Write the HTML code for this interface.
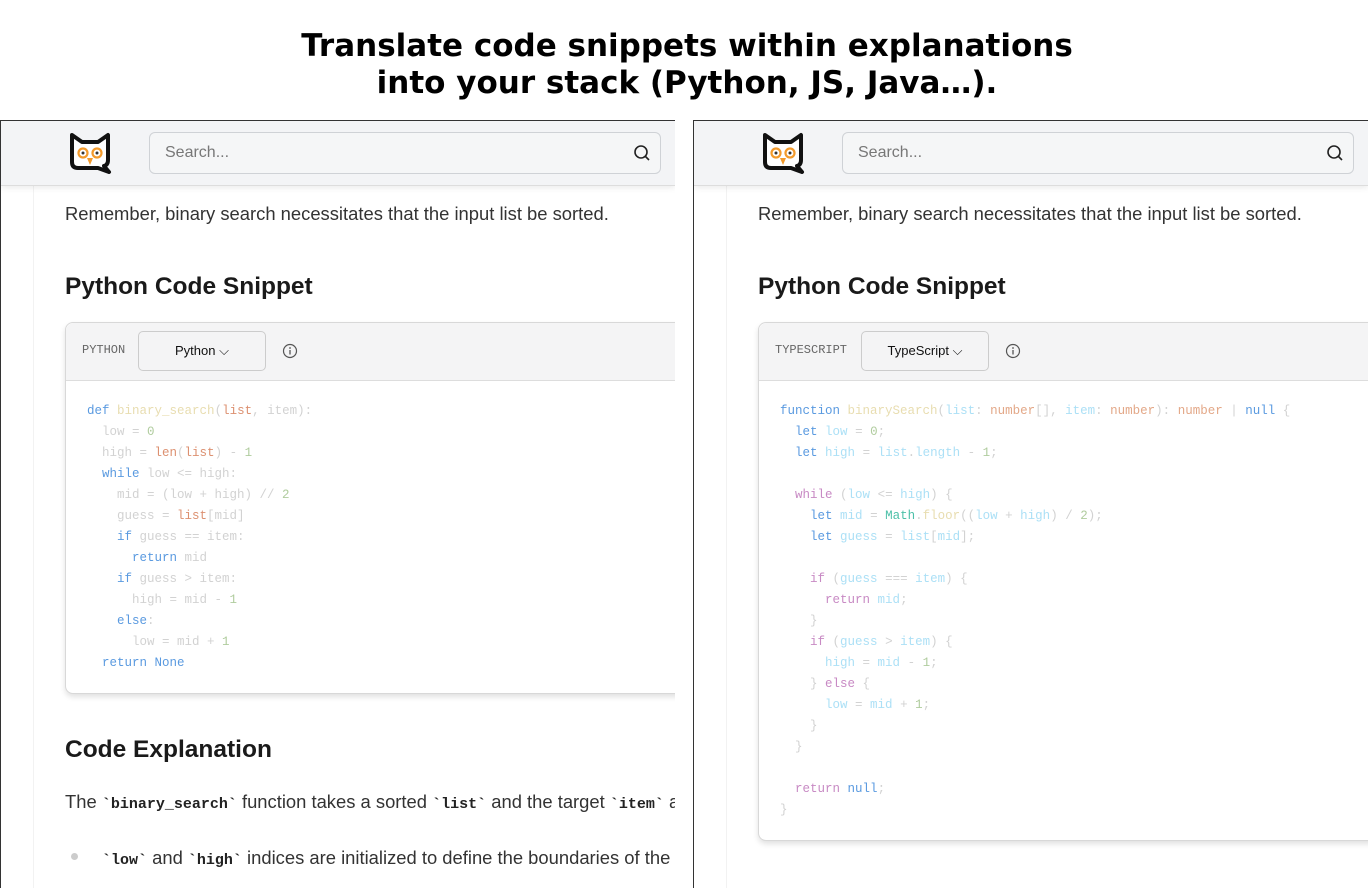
<!DOCTYPE html>
<html><head><meta charset="utf-8"><style>
*{box-sizing:border-box;margin:0;padding:0}
body{width:1368px;height:888px;background:#fff;position:relative;overflow:hidden;font-family:"Liberation Sans","DejaVu Sans",sans-serif;color:#1f1f1f}
.title{position:absolute;top:28px;left:3px;width:1368px;text-align:center;font-family:"DejaVu Sans",sans-serif;font-weight:bold;font-size:31px;line-height:37px;color:#000}
.panel{position:absolute;top:120px;width:675px;height:768px;border-left:1px solid #333;border-top:1px solid #333;overflow:hidden;background:#fff}
.hdr{position:absolute;top:0;left:0;right:0;height:65px;background:#f3f4f6;border-bottom:1px solid #ddd;box-shadow:0 2px 6px rgba(0,0,0,.08);z-index:2}
.logo{position:absolute;left:67px;top:11px}
.search{position:absolute;left:148px;top:11px;width:512px;height:42px;border:1px solid #cfd2d6;border-radius:6px;background:#f5f6f7;font-size:16px;color:#777;padding:11px 15px}
.search svg{position:absolute;right:8px;top:10px}
.side{position:absolute;left:32px;top:65px;bottom:0;width:1px;background:#f2f2f2}
.p{position:absolute;left:64px;font-size:18.4px;color:#333;white-space:nowrap}
.h{position:absolute;left:64px;font-size:24.5px;font-weight:bold;color:#1a1a1a;white-space:nowrap}
.code{position:absolute;left:64px;top:201px;width:700px;border:1px solid #d8d8d8;border-radius:8px;background:#fff;box-shadow:0 3px 6px rgba(0,0,0,.12)}
.ch{height:58px;background:#f4f4f5;border-bottom:1px solid #ddd;border-radius:8px 8px 0 0;position:relative}
.lang{position:absolute;left:16px;top:20px;font-family:"Liberation Mono",monospace;font-size:12px;color:#666}
.sel{position:absolute;left:72px;top:8px;width:128px;height:40px;border:1px solid #ccc;border-radius:5px;font-size:13px;color:#111;text-align:center;line-height:38px}
.info{position:absolute;left:216px;top:20px}
pre{font-family:"Liberation Mono","DejaVu Sans Mono",monospace;font-size:12.5px;line-height:21px;padding:20px 21px 19px;color:#d2d2d2}
.k{color:#5a9ae0}.f{color:#e8ddb0}.r{color:#dc9070}.n{color:#b0cc9e}.v{color:#b5dff5}.m{color:#c88ac4}.t{color:#e3a888}.g{color:#4cc0a8}.lb{color:#ace0f6}
code.b{font-family:"Liberation Mono",monospace;font-weight:bold;font-size:15px;color:#222}
</style></head><body>
<div class="title">Translate code snippets within explanations<br>into your stack (Python, JS, Java…).</div>

<div class="panel" style="left:0">
 <div class="hdr">
  <svg class="logo" width="44" height="42" viewBox="0 0 44 42"><path d="M4 3 L14 10 H30 L40 3 V28 Q40 33 36 34 L41 40 L30 36 H10 Q4 36 4 30 Z" fill="#fff" stroke="#111" stroke-width="4" stroke-linejoin="round"/><circle cx="15" cy="21" r="4.5" fill="none" stroke="#f39a2b" stroke-width="2.2"/><circle cx="29" cy="21" r="4.5" fill="none" stroke="#f39a2b" stroke-width="2.2"/><circle cx="15" cy="21" r="1.5" fill="#333"/><circle cx="29" cy="21" r="1.5" fill="#333"/><path d="M19 26 L25 26 L22 33 Z" fill="#f39a2b"/></svg>
  <div class="search">Search...<svg width="20" height="20" viewBox="0 0 20 20"><circle cx="9" cy="9" r="6" fill="none" stroke="#222" stroke-width="1.6"/><path d="M13.5 13.5 L17 17" stroke="#222" stroke-width="1.6"/></svg></div>
 </div>
 <div class="side"></div>
 <div class="p" style="top:82px">Remember, binary search necessitates that the input list be sorted.</div>
 <div class="h" style="top:152px">Python Code Snippet</div>
 <div class="code">
  <div class="ch"><span class="lang">PYTHON</span><div class="sel">Python ⌵</div><svg class="info" width="16" height="16" viewBox="0 0 16 16"><circle cx="8" cy="8" r="6.5" fill="none" stroke="#555" stroke-width="1.2"/><path d="M8 7v4.5" stroke="#555" stroke-width="1.3"/><circle cx="8" cy="5" r=".9" fill="#555"/></svg></div>
<pre><span class="k">def</span> <span class="f">binary_search</span>(<span class="r">list</span>, item):
  low = <span class="n">0</span>
  high = <span class="r">len</span>(<span class="r">list</span>) - <span class="n">1</span>
  <span class="k">while</span> low &lt;= high:
    mid = (low + high) // <span class="n">2</span>
    guess = <span class="r">list</span>[mid]
    <span class="k">if</span> guess == item:
      <span class="k">return</span> mid
    <span class="k">if</span> guess &gt; item:
      high = mid - <span class="n">1</span>
    <span class="k">else</span>:
      low = mid + <span class="n">1</span>
  <span class="k">return</span> <span class="k">None</span></pre>
 </div>
 <div class="h" style="top:615px">Code Explanation</div>
 <div class="p" style="top:670px">The <code class="b">`binary_search`</code> function takes a sorted <code class="b">`list`</code> and the target <code class="b">`item`</code> as input.</div>
 <div style="position:absolute;left:70px;top:732px;width:7px;height:7px;border-radius:50%;background:#ccc"></div>
 <div class="p" style="top:726px;left:101px"><code class="b">`low`</code> and <code class="b">`high`</code> indices are initialized to define the boundaries of the search.</div>
</div>

<div class="panel" style="left:693px">
 <div class="hdr">
  <svg class="logo" width="44" height="42" viewBox="0 0 44 42"><path d="M4 3 L14 10 H30 L40 3 V28 Q40 33 36 34 L41 40 L30 36 H10 Q4 36 4 30 Z" fill="#fff" stroke="#111" stroke-width="4" stroke-linejoin="round"/><circle cx="15" cy="21" r="4.5" fill="none" stroke="#f39a2b" stroke-width="2.2"/><circle cx="29" cy="21" r="4.5" fill="none" stroke="#f39a2b" stroke-width="2.2"/><circle cx="15" cy="21" r="1.5" fill="#333"/><circle cx="29" cy="21" r="1.5" fill="#333"/><path d="M19 26 L25 26 L22 33 Z" fill="#f39a2b"/></svg>
  <div class="search">Search...<svg width="20" height="20" viewBox="0 0 20 20"><circle cx="9" cy="9" r="6" fill="none" stroke="#222" stroke-width="1.6"/><path d="M13.5 13.5 L17 17" stroke="#222" stroke-width="1.6"/></svg></div>
 </div>
 <div class="side"></div>
 <div class="p" style="top:82px">Remember, binary search necessitates that the input list be sorted.</div>
 <div class="h" style="top:152px">Python Code Snippet</div>
 <div class="code">
  <div class="ch"><span class="lang">TYPESCRIPT</span><div class="sel" style="left:102px">TypeScript ⌵</div><svg class="info" style="left:246px" width="16" height="16" viewBox="0 0 16 16"><circle cx="8" cy="8" r="6.5" fill="none" stroke="#555" stroke-width="1.2"/><path d="M8 7v4.5" stroke="#555" stroke-width="1.3"/><circle cx="8" cy="5" r=".9" fill="#555"/></svg></div>
<pre><span class="k">function</span> <span class="f">binarySearch</span>(<span class="lb">list</span>: <span class="t">number</span>[], <span class="lb">item</span>: <span class="t">number</span>): <span class="t">number</span> | <span class="k">null</span> {
  <span class="k">let</span> <span class="lb">low</span> = <span class="n">0</span>;
  <span class="k">let</span> <span class="lb">high</span> = <span class="lb">list</span>.<span class="lb">length</span> - <span class="n">1</span>;

  <span class="m">while</span> (<span class="lb">low</span> &lt;= <span class="lb">high</span>) {
    <span class="k">let</span> <span class="lb">mid</span> = <span class="g">Math</span>.<span class="f">floor</span>((<span class="lb">low</span> + <span class="lb">high</span>) / <span class="n">2</span>);
    <span class="k">let</span> <span class="lb">guess</span> = <span class="lb">list</span>[<span class="lb">mid</span>];

    <span class="m">if</span> (<span class="lb">guess</span> === <span class="lb">item</span>) {
      <span class="m">return</span> <span class="lb">mid</span>;
    }
    <span class="m">if</span> (<span class="lb">guess</span> &gt; <span class="lb">item</span>) {
      <span class="lb">high</span> = <span class="lb">mid</span> - <span class="n">1</span>;
    } <span class="m">else</span> {
      <span class="lb">low</span> = <span class="lb">mid</span> + <span class="n">1</span>;
    }
  }

  <span class="m">return</span> <span class="k">null</span>;
}</pre>
 </div>
</div>
</body></html>
